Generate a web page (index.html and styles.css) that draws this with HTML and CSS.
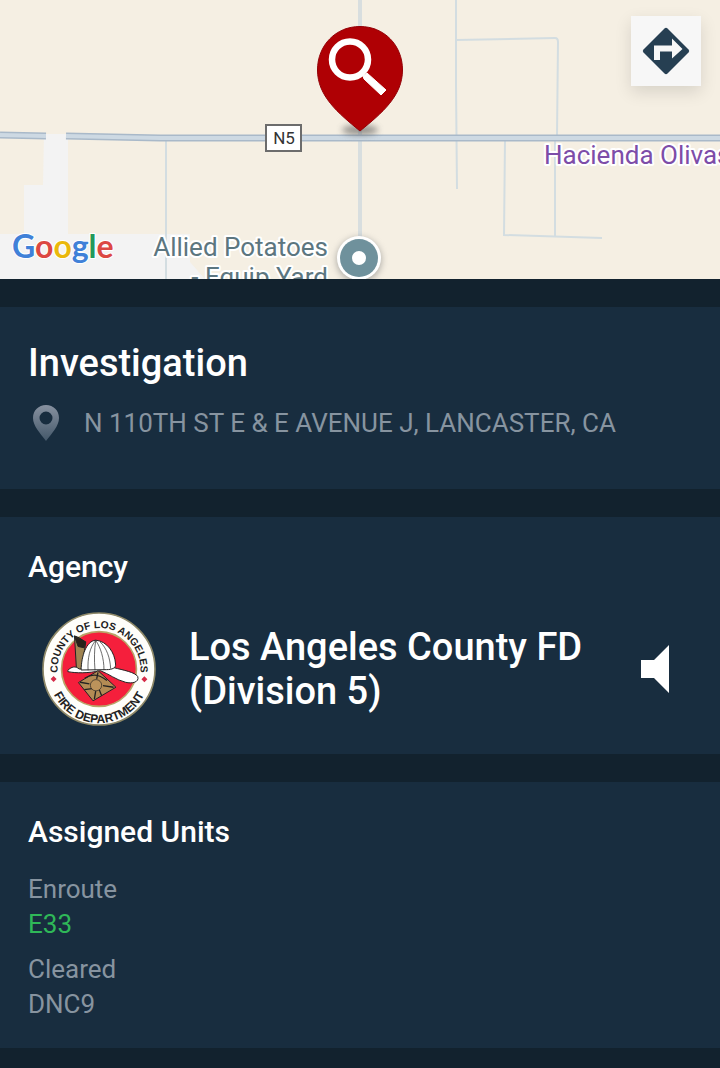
FILE: index.html
```html
<!DOCTYPE html>
<html lang="en">
<head>
	<title>Investigation</title>
	<meta charset="utf-8">
	<meta name="viewport" content="width=device-width, initial-scale=1">
	<link rel="stylesheet" href="styles.css">
</head>
<body>
	<!--Incident map-->
	<div class="map">
		<svg class="map-canvas" viewBox="0 0 720 279" preserveAspectRatio="xMidYMid slice">
			<defs>
				<filter id="soft" x="-50%" y="-100%" width="200%" height="300%">
					<feGaussianBlur stdDeviation="3"/>
				</filter>
			</defs>
			<!--Land-->
			<rect width="720" height="279" fill="#f5efe3"/>
			<path d="M44 134H68V234H165V279H0V234H24V185H43Z" fill="#f3f3f3"/>
			<path d="M165 234V279H205L190 262V234Z" fill="#f3f3f3"/>
			<!--Side roads-->
			<g fill="none" stroke="#d3dde1" stroke-width="2">
				<path d="M360 0V279" stroke-width="4" stroke="#d8dedf"/>
				<path d="M166 140V279"/>
				<path d="M456 0V85L457 189"/>
				<path d="M456 40L555 38Q558 38 558 42L557 136"/>
				<path d="M505 140L504 235L602 238"/>
				<path d="M555 140V236"/>
			</g>
			<!--Highway-->
			<path d="M0 135L46 136M66 136L160 138H720" fill="none" stroke="#a9b9c9" stroke-width="7"/>
			<path d="M0 135L46 136M66 136L160 138H720" fill="none" stroke="#cdd9e3" stroke-width="4"/>
			<rect x="266" y="125" width="35" height="26" fill="#fff" stroke="#6c6c6c" stroke-width="2"/>
			<text class="shield" x="284" y="144" text-anchor="middle">N5</text>
			<!--Places-->
			<text class="place poi" x="544" y="164">Hacienda Olivas</text>
			<text class="place" x="328" y="256" text-anchor="end">Allied Potatoes</text>
			<text class="place" x="328" y="286" text-anchor="end">- Equip Yard</text>
			<circle cx="359" cy="260" r="23" fill="#777" opacity=".5" filter="url(#soft)"/>
			<circle cx="359" cy="258" r="22" fill="#fff"/>
			<circle cx="359" cy="258" r="19" fill="#6f919c"/>
			<circle cx="359" cy="258" r="7" fill="#fff"/>
			<text class="google" x="12" y="258"><tspan fill="#4081d8">G</tspan><tspan fill="#dc4843">o</tspan><tspan fill="#eab80c">o</tspan><tspan fill="#4081d8">g</tspan><tspan fill="#23995a">l</tspan><tspan fill="#dc4843">e</tspan></text>
			<!--Incident pin-->
			<ellipse cx="360" cy="130" rx="18" ry="5" fill="#555" opacity=".6" filter="url(#soft)"/>
			<path d="M360 26.500C384 26.500 402.500 45 402.500 70C402.500 96 382 113 360 131C338 113 317.500 96 317.500 70C317.500 45 336 26.500 360 26.500Z" fill="#af0004" stroke="#930006"/>
			<circle cx="350" cy="59.500" r="18" fill="none" stroke="#fff" stroke-width="6.500"/>
			<path d="M363 76L367 73L386 90L381 95L364 79Z" fill="#fff" stroke="#fff"/>
		</svg>
		<button class="directions" aria-label="Directions">
			<svg viewBox="0 0 48 48" width="48" height="48">
				<path d="M22.500 1.500Q24 0 25.500 1.500L46.500 22.500Q48 24 46.500 25.500L25.500 46.500Q24 48 22.500 46.500L1.500 25.500Q0 24 1.500 22.500Z" fill="#263f52"/>
				<path d="M12 33V18.500H30V11.500L40.500 22L30 31.500V24.500H18V33Z" fill="#f7f7f7"/>
			</svg>
		</button>
	</div>

	<!--Call type and address-->
	<section class="card">
		<h1>Investigation</h1>
		<p class="address">
			<svg viewBox="0 0 28 38" width="28" height="38">
				<defs>
					<linearGradient id="fade" x1="0" y1="0" x2="0" y2="1">
						<stop offset="0" stop-color="#8791a0"/>
						<stop offset="1" stop-color="#44586a"/>
					</linearGradient>
				</defs>
				<path fill="url(#fade)" fill-rule="evenodd" d="M14 1C6.500 1 1 6.500 1 14C1 22 8 29 14 37C20 29 27 22 27 14C27 6.500 21.500 1 14 1ZM14 7.500A6.500 6.500 0 1 1 14 20.500A6.500 6.500 0 1 1 14 7.500Z"/>
			</svg>
			N 110TH ST E &amp; E AVENUE J, LANCASTER, CA
		</p>
	</section>

	<!--Agency-->
	<section class="card">
		<h2>Agency</h2>
		<div class="agency">
			<svg class="emblem" viewBox="36 37 344 344">
				<defs>
					<path id="arc-top" d="M84 226A125 125 0 1 1 332 226"/>
					<path id="arc-bottom" d="M57 221A151 151 0 0 0 359 221"/>
				</defs>
				<circle cx="208" cy="209" r="169" fill="#fffefa" stroke="#8f8968" stroke-width="5"/>
				<circle cx="208" cy="209" r="113" fill="#f51f3c" stroke="#b9a468" stroke-width="5"/>
				<text class="motto" text-anchor="middle"><textPath href="#arc-top" startOffset="50%">COUNTY OF LOS ANGELES</textPath></text>
				<text class="motto motto-large" text-anchor="middle"><textPath href="#arc-bottom" startOffset="50%">FIRE DEPARTMENT</textPath></text>
				<path d="M71 230L80 239L71 248L62 239ZM345 231L354 240L345 249L336 240Z" fill="#d52b48"/>
				<!--Helmet-->
				<g stroke="#222" stroke-width="3" stroke-linejoin="round">
					<path d="M134 109L149 115L168 129L155 211L140 210Z" fill="#a08452"/>
					<path d="M134 110L168 127L163 145L145 141Z" fill="#2a211a"/>
					<path d="M114 213C125 202 137 199 148 209L253 205C280 212 318 219 325 232C330 249 308 254 288 249C260 242 238 224 212 214C175 222 140 222 114 217Z" fill="#fff"/>
					<path d="M154 212C155 170 169 125 198 122C232 125 256 159 258 194C260 205 249 211 230 211Z" fill="#fff"/>
					<path d="M198 123C180 143 173 178 175 213M198 123C194 150 193 180 196 213M198 123C213 143 223 178 223 211M211 127C231 145 242 177 243 208" fill="none" stroke-width="2"/>
					<path d="M205 214L259 264L190 305L146 250Z" fill="#b38b54"/>
					<path d="M151 249L179 254M252 264L220 259M194 300L198 276M205 219L201 239M165 237Q197 215 232 244M164 271L187 268M216 290L209 272" fill="none" stroke-width="4"/>
					<circle cx="199" cy="258" r="17" fill="#bc935b" stroke-width="2"/>
				</g>
			</svg>
			<p class="agency-name">Los Angeles County FD (Division 5)</p>
			<button class="listen" aria-label="Listen">
				<svg viewBox="0 0 28 48" width="28" height="48">
					<path d="M0 15H13L28 0V48L13 33H0Z" fill="#fff"/>
				</svg>
			</button>
		</div>
	</section>

	<!--Assigned units-->
	<section class="card">
		<h2>Assigned Units</h2>
		<dl class="units">
			<div>
				<dt>Enroute</dt>
				<dd class="enroute">E33</dd>
			</div>
			<div>
				<dt>Cleared</dt>
				<dd>DNC9</dd>
			</div>
		</dl>
	</section>
</body>
</html>
```
FILE: styles.css
```css
*{
	box-sizing: border-box;
}

body{
	margin: 0;
	background: #12222e;
	color: #fff;
	font-family: Roboto, sans-serif;
}

h1, h2, p, dl, dd{
	margin: 0;
}

button{
	padding: 0;
	border: none;
	cursor: pointer;
}

svg{
	display: block;
	flex: none;
}

/* map */
.map{
	position: relative;
	height: 279px;
	overflow: hidden;
}

.map-canvas{
	width: 100%;
	height: 100%;
}

.place{
	font-size: 26px;
	fill: #5c7680;
	stroke: #fff;
	stroke-width: 4px;
	stroke-linejoin: round;
	paint-order: stroke;
}

.poi{
	fill: #7d4da8;
}

.shield{
	font-size: 17px;
	fill: #333;
}

.google{
	font-family: Lato, sans-serif;
	font-size: 32px;
	font-weight: bold;
	stroke: #fff;
	stroke-width: 2px;
	paint-order: stroke;
}

.directions{
	position: absolute;
	top: 16px;
	right: 19px;
	display: flex;
	align-items: center;
	justify-content: center;
	width: 70px;
	height: 70px;
	background: #f7f7f7;
	box-shadow: 0 6px 16px rgba(0, 0, 0, 0.12);
}

/* cards */
.card{
	margin-bottom: 28px;
	padding: 28px;
	background: #182d3f;
}

.map + .card{
	margin-top: 28px;
	padding-bottom: 34px;
}

.card:last-child{
	margin-bottom: 20px;
	padding-bottom: 26px;
}

h1{
	font-size: 38px;
	font-weight: 500;
	line-height: 56px;
}

h2{
	font-size: 30px;
	font-weight: 500;
	line-height: 44px;
}

.address{
	display: flex;
	align-items: center;
	gap: 24px;
	padding-left: 4px;
	color: #8794a0;
	font-size: 26px;
	line-height: 64px;
}

.agency{
	display: flex;
	align-items: center;
	gap: 33px;
	margin-top: 23px;
	padding: 0 23px 0 14px;
}

.emblem{
	width: 114px;
	height: 114px;
}

.motto{
	font-family: "Liberation Sans", sans-serif;
	font-size: 31px;
	font-weight: bold;
	fill: #222;
}

.motto-large{
	font-size: 36px;
}

.agency-name{
	flex: 1;
	font-size: 38px;
	font-weight: 500;
	line-height: 44px;
}

.listen{
	background: none;
}

.units{
	display: flex;
	flex-direction: column;
	gap: 10px;
	margin-top: 18px;
	color: #8794a0;
	font-size: 26px;
	line-height: 35px;
}

.enroute{
	color: #2fb858;
}
```
